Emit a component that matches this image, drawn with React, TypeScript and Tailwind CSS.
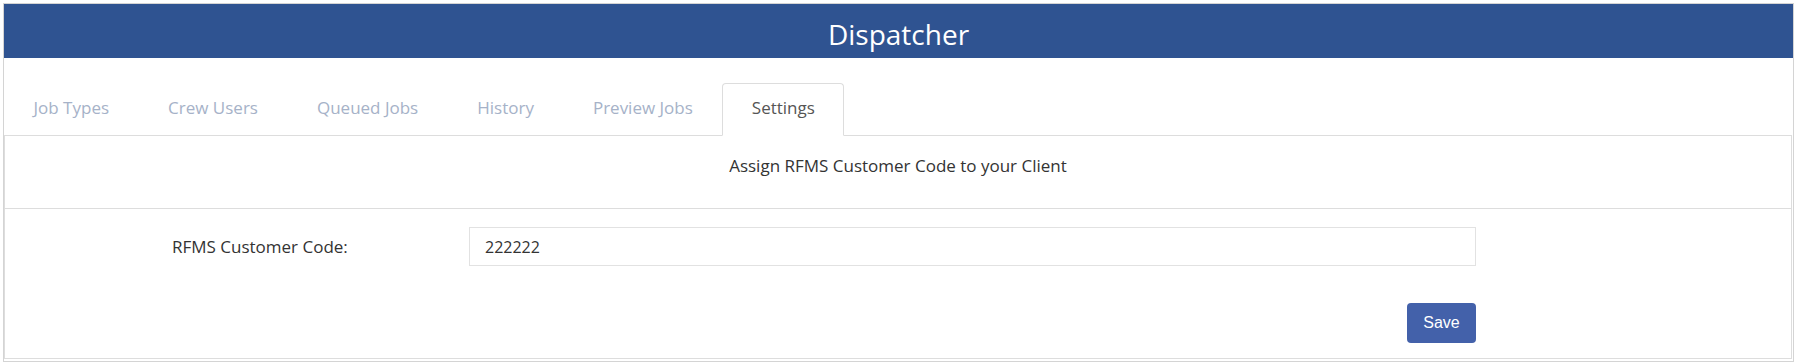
import React, { useState } from "react";

const tabs = ["Job Types", "Crew Users", "Queued Jobs", "History", "Preview Jobs", "Settings"];

export default function App() {
  const [active, setActive] = useState("Settings");
  const [code, setCode] = useState("222222");

  return (
    <div
      className="w-[1796px] h-[362px] bg-white pt-[3px] pl-[3px] pr-[2px]"
      style={{ fontFamily: '"Open Sans", "Noto Sans", sans-serif' }}
    >
      <div className="border border-[#d4d4d4] h-[359px]">
        {/* header */}
        <div className="h-[54px] bg-[#2f5391] text-white text-center text-[28px] pt-[8px] leading-[45px]">
          Dispatcher
        </div>

        {/* tabs */}
        <div className="flex pt-[25px]">
          {tabs.map((t) => (
            <button
              key={t}
              onClick={() => setActive(t)}
              className={
                t === active
                  ? "relative z-10 -mb-px h-[53px] pb-[4px] px-[28.5px] text-[17px] text-[#555555] bg-white border border-[#dddddd] border-b-white rounded-t-[4px]"
                  : "relative z-10 -mb-px h-[53px] pb-[4px] px-[28.5px] text-[17px] text-[#a6b2c8] border border-transparent"
              }
            >
              {t}
            </button>
          ))}
        </div>

        {/* panel */}
        <div className="border border-[#dddddd] mr-[1px] h-[224px]">
          <div className="text-center text-[17px] leading-[24px] text-[#333333] pt-[18px] pb-[30px] border-b border-[#dddddd]">
            Assign RFMS Customer Code to your Client
          </div>
          <div className="flex pt-[18px] pl-[167px]">
            <label className="w-[297px] h-[39px] flex items-center text-[17px] text-[#333333]">
              RFMS Customer Code:
            </label>
            <div className="w-[1007px] flex flex-col items-end">
              <input
                value={code}
                onChange={(e) => setCode(e.target.value)}
                className="w-full h-[39px] border border-[#e2e2e2] px-[15px] text-[16px] text-[#333333] outline-none"
              />
              <button
                className="mt-[37px] h-[40px] w-[69px] rounded-[4px] bg-[#4361aa] text-white text-[16px]"
                style={{ fontFamily: '"Liberation Sans", Arial, sans-serif' }}
              >
                Save
              </button>
            </div>
          </div>
        </div>
      </div>
    </div>
  );
}
